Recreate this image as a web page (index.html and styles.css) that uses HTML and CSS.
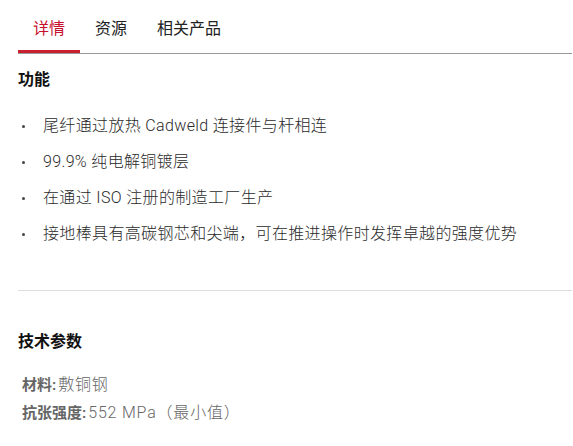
FILE: index.html
```html
<!DOCTYPE html>
<html lang="zh-CN">
<head>
  <meta charset="UTF-8">
  <meta name="viewport" content="width=device-width, initial-scale=1.0">
  <title>产品详情</title>
  <link rel="stylesheet" href="styles.css">
</head>

<body>
  <div class="page">
    <div class="tabs">
      <button class="tab active">详情</button>
      <button class="tab">资源</button>
      <button class="tab">相关产品</button>
    </div>

    <div class="section features-section">
      <h3>功能</h3>
      <ul class="features">
        <li>尾纤通过放热 Cadweld 连接件与杆相连</li>
        <li>99.9% 纯电解铜镀层</li>
        <li>在通过 ISO 注册的制造工厂生产</li>
        <li>接地棒具有高碳钢芯和尖端，可在推进操作时发挥卓越的强度优势</li>
      </ul>
    </div>

    <hr class="divider">

    <div class="section specs">
      <h3>技术参数</h3>
      <div class="spec"><b>材料:</b>敷铜钢</div>
      <div class="spec"><b>抗张强度:</b>552 MPa（最小值）</div>
    </div>
  </div>
</body>
</html>
```

FILE: styles.css
```css
body {
  margin: 0;
  background-color: #fff;
  font-family: Roboto, "Noto Sans CJK SC", sans-serif;
  color: #222;
}

.page {
  margin: 0 1px 0 18px;
}

.tabs {
  display: flex;
  border-bottom: 1px solid #999;
}

.tab {
  padding: 17px 15px 9px;
  border: none;
  border-bottom: 3px solid transparent;
  background: none;
  font-family: inherit;
  font-size: 16px;
  line-height: 24px;
  color: #222;
  cursor: pointer;
}

.tab.active {
  color: #c8102e;
  border-bottom-color: #c8202f;
}

.section h3 {
  margin: 0;
  font-size: 16px;
  line-height: 24px;
  font-weight: 700;
  color: #111;
}

.features-section h3 {
  margin-top: 14px;
}

.features {
  list-style: none;
  margin: 22px 0 0;
  padding: 0;
}

.features li {
  position: relative;
  padding-left: 25px;
  margin-bottom: 12px;
  font-size: 16px;
  line-height: 24px;
  letter-spacing: 0.35px;
  font-weight: 300;
  color: #2a2a2a;
}

.features li::before {
  content: "";
  position: absolute;
  left: 4px;
  top: 11px;
  width: 3px;
  height: 3px;
  border-radius: 50%;
  background-color: #444;
}

.divider {
  margin: 44px 0 39px;
  border: none;
  border-top: 1px solid #ddd;
}

.specs h3 {
  margin-bottom: 17px;
}

.spec {
  padding-left: 4px;
  font-size: 16px;
  line-height: 27px;
  letter-spacing: 0.8px;
  font-weight: 300;
  color: #666;
}

.spec b {
  font-size: 15px;
  letter-spacing: 0;
  font-weight: 700;
  color: #666;
  margin-right: 2px;
}
```
